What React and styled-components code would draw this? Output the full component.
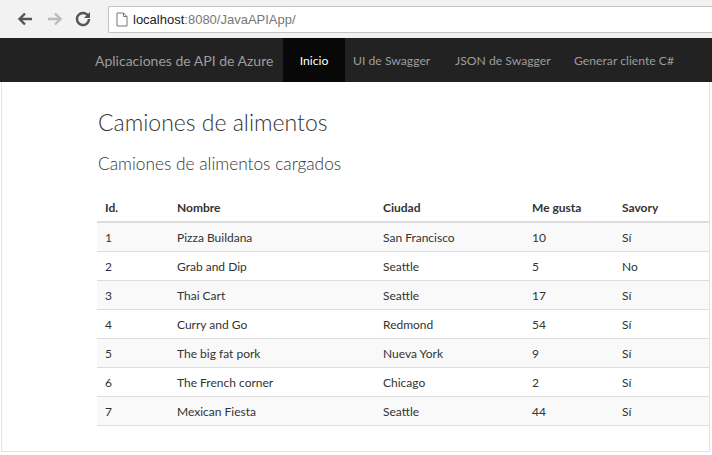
import React from 'react';
import styled, { createGlobalStyle } from 'styled-components';

const Global = createGlobalStyle`
  html, body { margin: 0; padding: 0; background: #fff; }
  body { font-family: Lato, "Open Sans", sans-serif; color: #333; }
`;

const Window = styled.div`
  width: 712px;
  height: 455px;
  display: flex;
  flex-direction: column;
  overflow: hidden;
`;

const ChromeBar = styled.div`
  height: 38px;
  background: #f2f2f2;
  display: flex;
  align-items: center;
  padding-left: 14px;
  box-sizing: border-box;
`;

const NavIcon = styled.div`
  width: 22px;
  height: 22px;
  margin-right: ${p => p.$gap || 6}px;
  display: flex;
  align-items: center;
  justify-content: center;
`;

const UrlBox = styled.div`
  flex: 1;
  height: 25px;
  margin-left: 8px;
  margin-top: 1px;
  background: #fff;
  border: 1px solid #c4c4c4;
  border-right: none;
  border-radius: 2px 0 0 2px;
  display: flex;
  align-items: center;
  padding-left: 7px;
  font-family: "Liberation Sans", Arial, sans-serif;
  font-size: 13px;
  color: #222;
`;

const UrlMuted = styled.span`
  color: #777;
`;

const NavBar = styled.div`
  height: 44px;
  background: #222;
  display: flex;
  align-items: stretch;
  padding-left: 95px;
  white-space: nowrap;
`;

const Brand = styled.div`
  display: flex;
  align-items: center;
  width: 188px;
  color: #9d9d9d;
  font-size: 14px;
`;

const NavLink = styled.div`
  display: flex;
  align-items: center;
  justify-content: ${p => (p.$active ? 'center' : 'flex-start')};
  box-sizing: border-box;
  width: ${p => p.$w}px;
  padding-left: ${p => (p.$active ? 0 : p.$pl)}px;
  font-size: 12.2px;
  color: ${p => (p.$active ? '#fff' : '#9d9d9d')};
  background: ${p => (p.$active ? '#080808' : 'transparent')};
`;

const Page = styled.div`
  flex: 1;
  border: 1px solid #e3e3e3;
  border-top: none;
  margin: 0 2px 3px 1px;
  padding-left: 95px;
`;

const Title = styled.h1`
  margin: 23px 0 0 1px;
  font-size: 23px;
  font-weight: 300;
  color: #333;
  line-height: 34px;
`;

const SubTitle = styled.h3`
  margin: 11px 0 0 1px;
  font-size: 17.3px;
  font-weight: 300;
  color: #333;
  line-height: 28px;
`;

const Table = styled.table`
  width: 100%;
  table-layout: fixed;
  border-collapse: collapse;
  margin-top: 16px;
  font-size: 12px;
`;

const Th = styled.th`
  box-sizing: border-box;
  text-align: left;
  font-weight: 700;
  height: 28px;
  padding: 0 8px;
  border-bottom: 2px solid #ddd;
  width: ${p => (p.$w ? `${p.$w}px` : 'auto')};
`;

const Row = styled.tr`
  background: ${p => (p.$odd ? '#f9f9f9' : '#fff')};
`;

const Td = styled.td`
  height: 28px;
  padding: 0 8px;
  border-bottom: 1px solid #ddd;
`;

const rows = [
  [1, 'Pizza Buildana', 'San Francisco', 10, 'Sí'],
  [2, 'Grab and Dip', 'Seattle', 5, 'No'],
  [3, 'Thai Cart', 'Seattle', 17, 'Sí'],
  [4, 'Curry and Go', 'Redmond', 54, 'Sí'],
  [5, 'The big fat pork', 'Nueva York', 9, 'Sí'],
  [6, 'The French corner', 'Chicago', 2, 'Sí'],
  [7, 'Mexican Fiesta', 'Seattle', 44, 'Sí'],
];

export default function App() {
  return (
    <Window>
      <Global />
      <ChromeBar>
        <NavIcon $gap={8}>
          <svg width="18" height="18" viewBox="0 0 18 18">
            <path d="M16 9H4M9 3.5L3.5 9 9 14.5" stroke="#555" strokeWidth="2.4" fill="none" />
          </svg>
        </NavIcon>
        <NavIcon $gap={6}>
          <svg width="18" height="18" viewBox="0 0 18 18">
            <path d="M2 9h12M9 3.5L14.5 9 9 14.5" stroke="#bbb" strokeWidth="2.4" fill="none" />
          </svg>
        </NavIcon>
        <NavIcon $gap={0}>
          <svg width="18" height="18" viewBox="0 0 18 18">
            <path d="M14.3 6.2A6 6 0 1 0 15 9" stroke="#555" strokeWidth="2.4" fill="none" />
            <path d="M16 2v6h-6z" fill="#555" />
          </svg>
        </NavIcon>
        <UrlBox>
          <svg width="12" height="15" viewBox="0 0 12 15" style={{ marginRight: 5 }}>
            <path d="M1 1h6.5L11 4.5V14H1z M7.5 1v3.5H11" stroke="#777" fill="#fff" strokeWidth="1" />
          </svg>
          localhost<UrlMuted>:8080/JavaAPIApp/</UrlMuted>
        </UrlBox>
      </ChromeBar>
      <NavBar>
        <Brand>Aplicaciones de API de Azure</Brand>
        <NavLink $active $w={62}>Inicio</NavLink>
        <NavLink $w={102} $pl={8}>UI de Swagger</NavLink>
        <NavLink $w={119} $pl={8}>JSON de Swagger</NavLink>
        <NavLink $w={120} $pl={8}>Generar cliente C#</NavLink>
      </NavBar>
      <Page>
        <Title>Camiones de alimentos</Title>
        <SubTitle>Camiones de alimentos cargados</SubTitle>
        <Table>
          <thead>
            <tr>
              <Th $w={72}>Id.</Th>
              <Th $w={206}>Nombre</Th>
              <Th $w={149}>Ciudad</Th>
              <Th $w={90}>Me gusta</Th>
              <Th>Savory</Th>
            </tr>
          </thead>
          <tbody>
            {rows.map((r, i) => (
              <Row key={r[0]} $odd={i % 2 === 0}>
                {r.map((c, j) => (
                  <Td key={j}>{c}</Td>
                ))}
              </Row>
            ))}
          </tbody>
        </Table>
      </Page>
    </Window>
  );
}
